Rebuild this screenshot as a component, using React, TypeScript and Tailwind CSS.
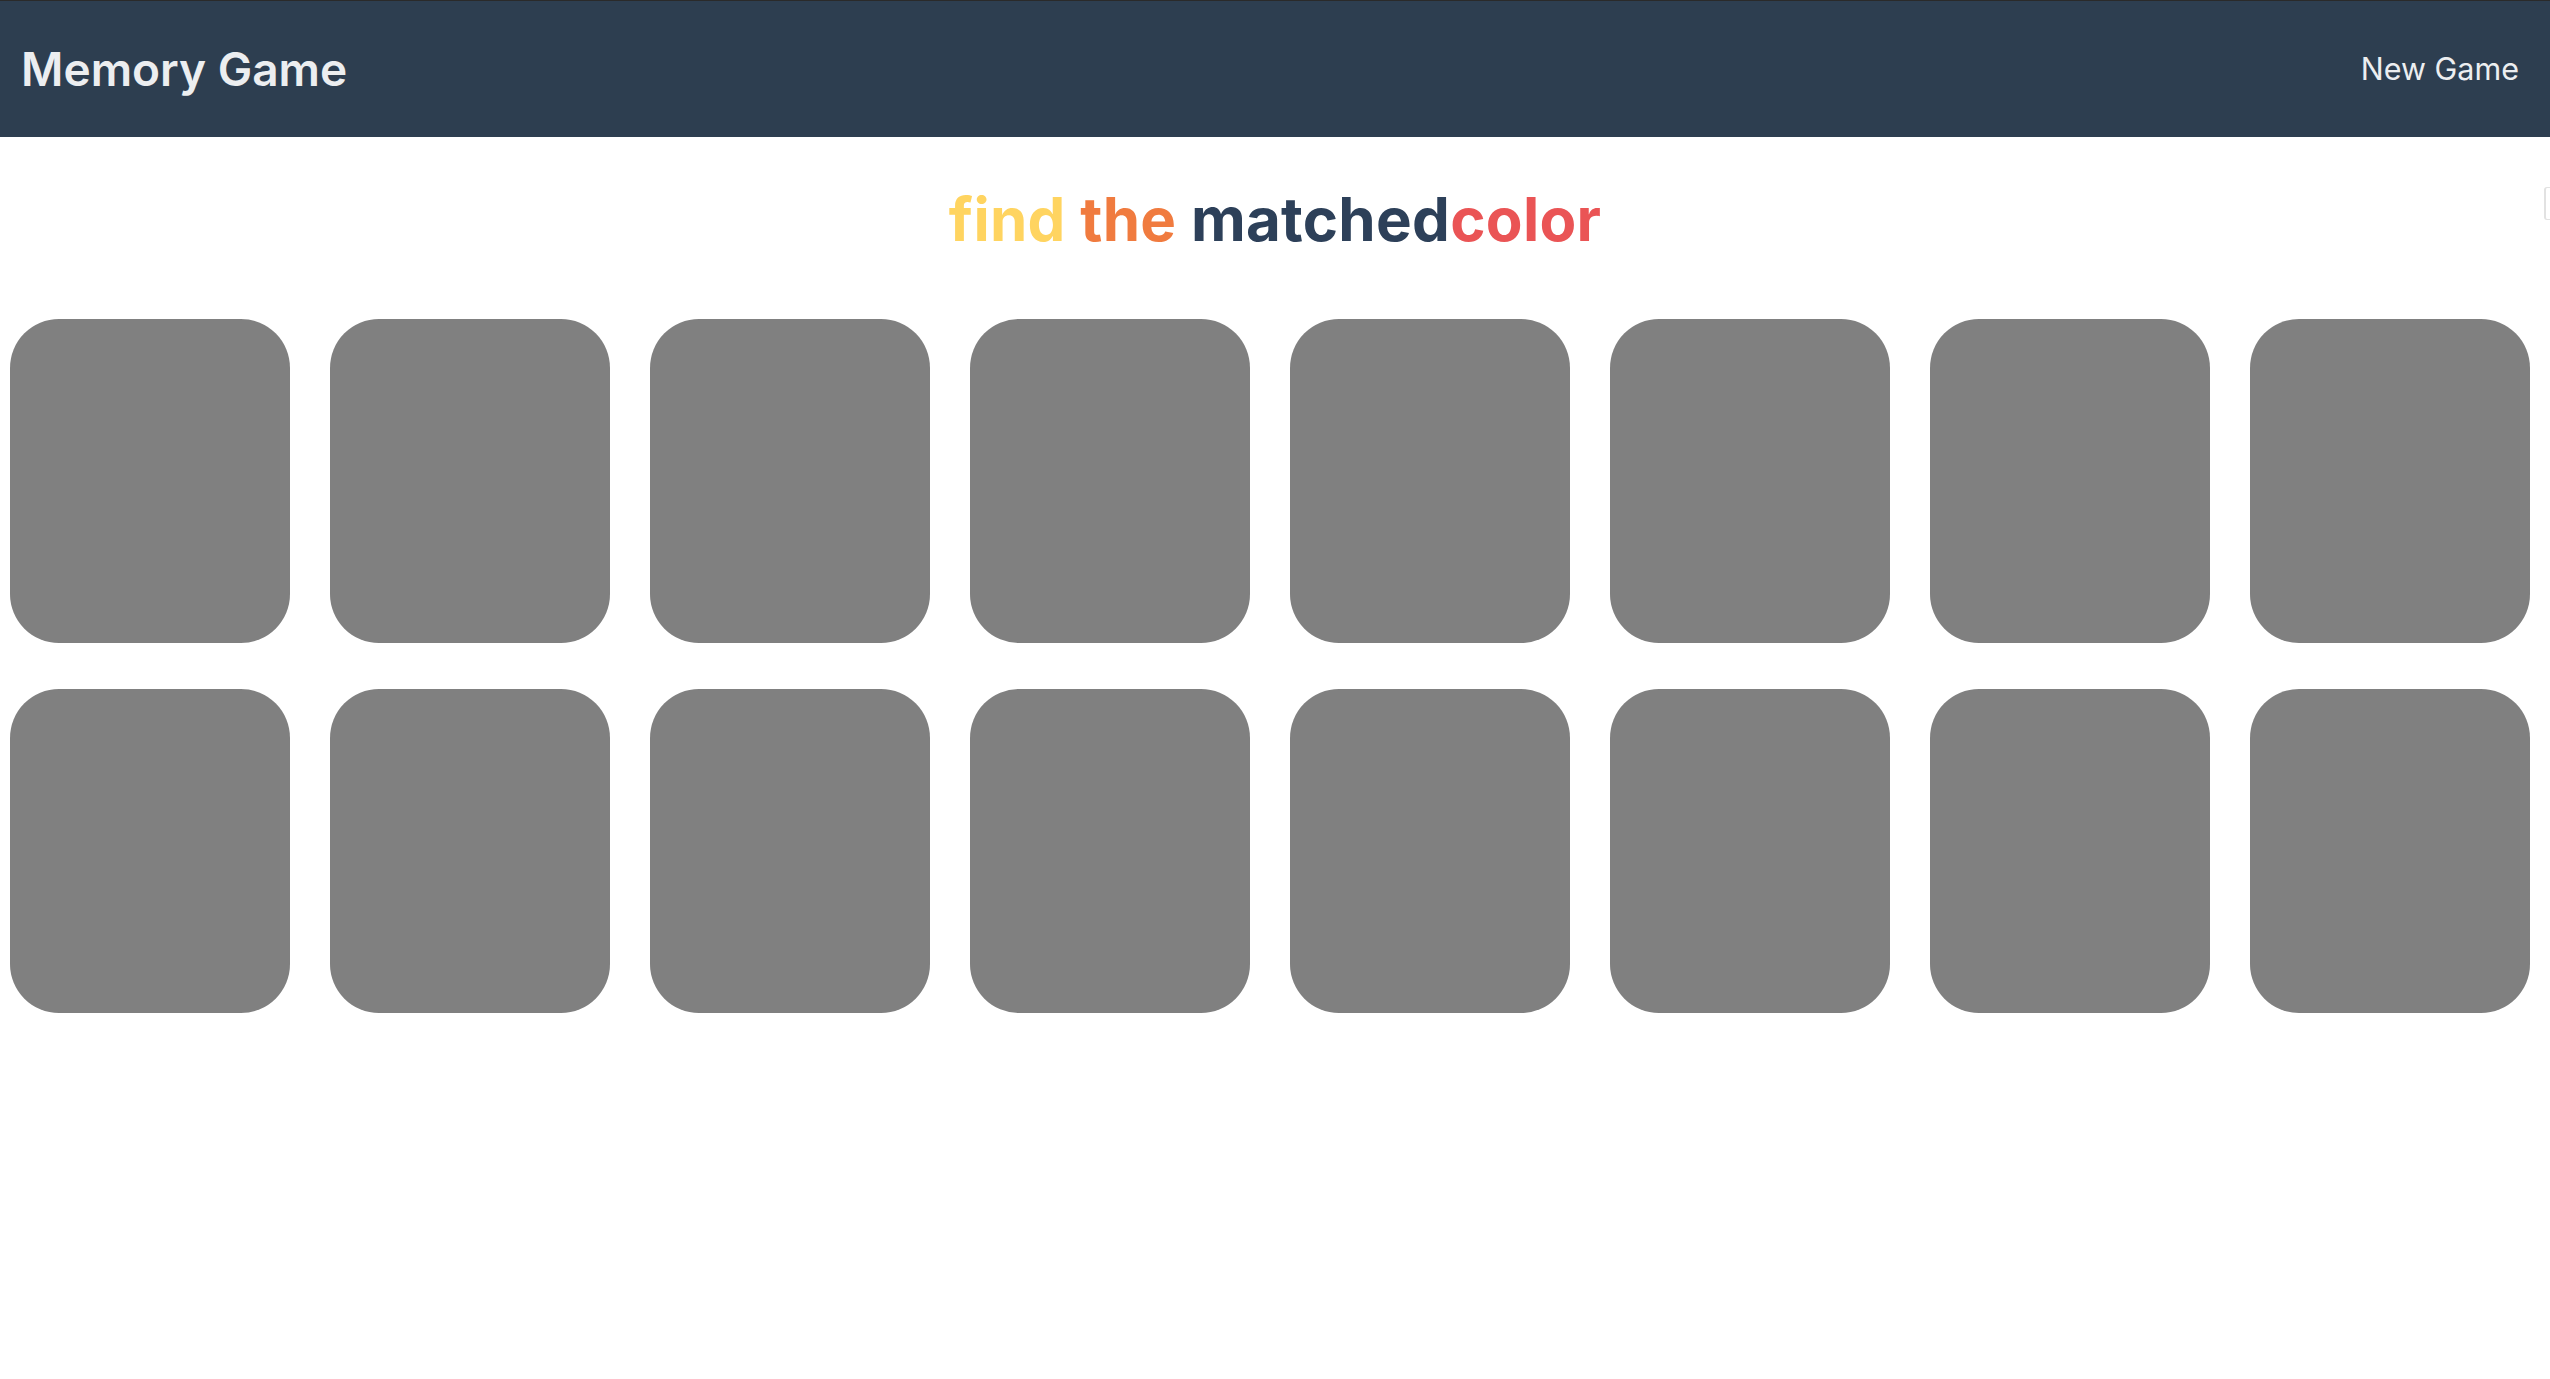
import React from "react";

const cards = Array.from({ length: 16 }, (_, i) => i);

export default function App() {
  return (
    <div
      className="relative min-h-[1379px] w-full bg-white"
      style={{ fontFamily: "Inter, 'Noto Sans', sans-serif" }}
    >
      <header className="flex h-[137px] items-center justify-between border-t border-[#2a2a2a] bg-[#2d3e50] pl-[21px] pr-[31px]">
        <h1 className="text-[46px] font-semibold leading-none text-[#eceef0]">Memory Game</h1>
        <button className="text-[30.5px] font-normal leading-none text-[#eceef0]">New Game</button>
      </header>

      <div className="flex justify-center pt-[46px] pb-[63px]">
        <h2 className="text-[60px] font-bold leading-[1.21] tracking-[0.3px]">
          <span className="text-[#ffd460]">find </span>
          <span className="text-[#f07b3f]">the </span>
          <span className="text-[#2d4059]">matched</span>
          <span className="text-[#ea5455]">color</span>
        </h2>
      </div>

      <div className="grid grid-cols-[repeat(8,280px)] gap-x-[40px] gap-y-[46px] pl-[10px]">
        {cards.map((c) => (
          <div key={c} className="h-[324px] w-[280px] rounded-[49px] bg-[#808080]" />
        ))}
      </div>

      <div className="absolute right-0 top-[187px] h-[33px] w-[6px] rounded-l-[3px] border-l-2 border-y border-[#e2e2e2] bg-white" />
    </div>
  );
}
